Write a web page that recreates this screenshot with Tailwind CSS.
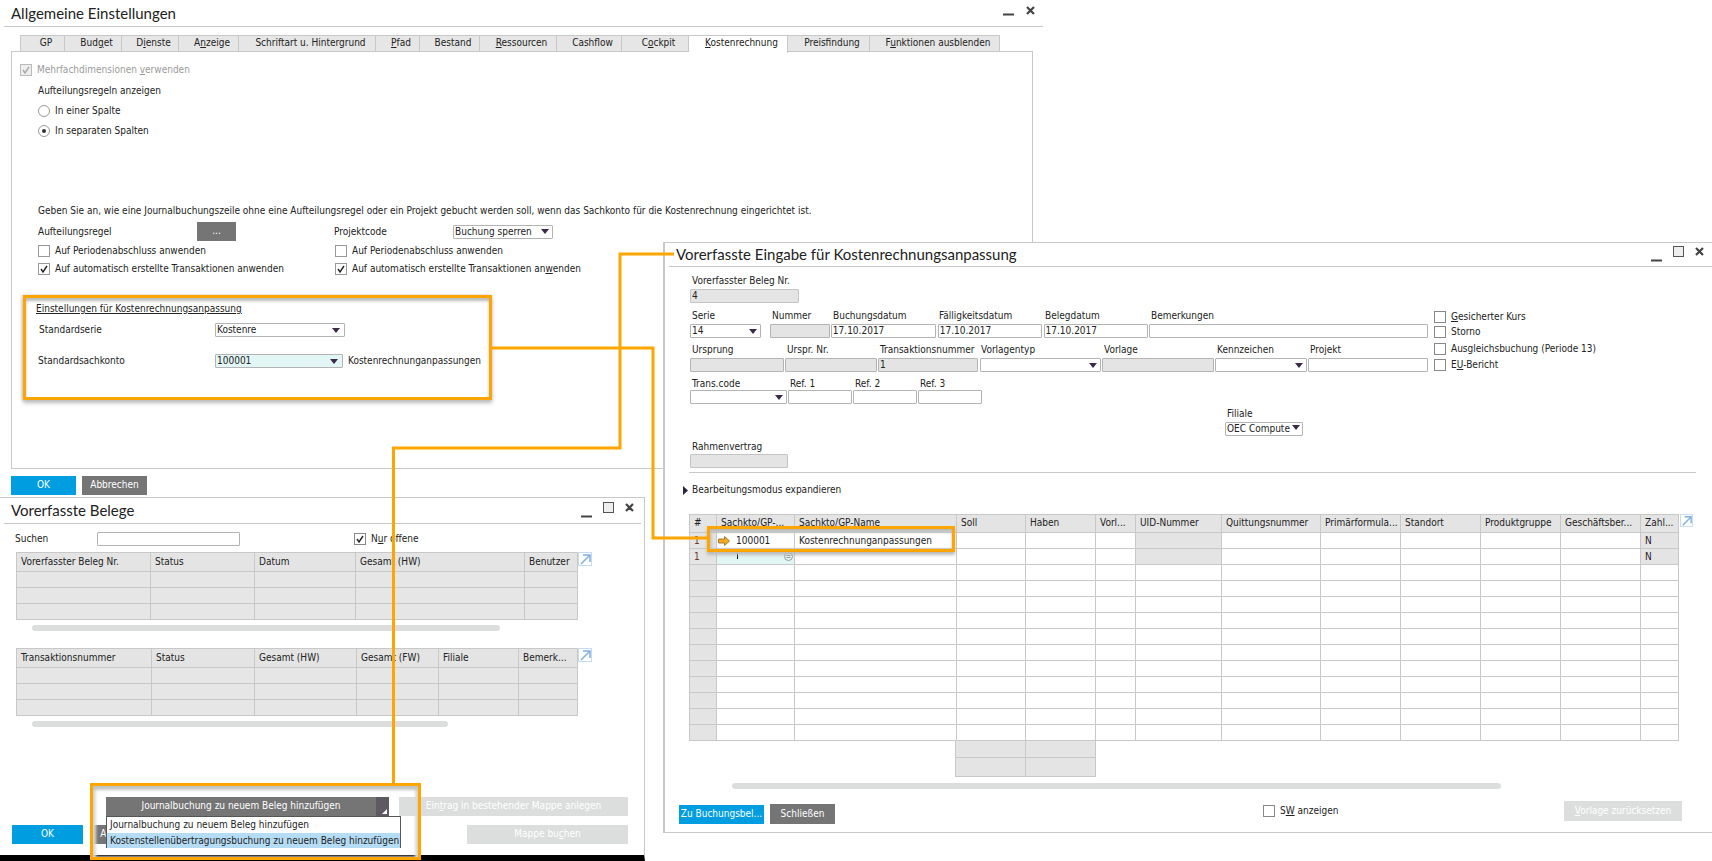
<!DOCTYPE html>
<html lang="de">
<head>
<meta charset="utf-8">
<title>Kostenrechnung</title>
<script src="https://cdn.jsdelivr.net/npm/@tailwindcss/browser@4"></script>
</head>
<body class="bg-white">
<div class="relative w-[1712px] h-[861px] overflow-hidden bg-white text-[10px] leading-[14px] text-[#222] font-['DejaVu_Sans_Condensed','Liberation_Sans',sans-serif]">

<!-- Fenster 1 -->
<section class="absolute left-0 top-0 w-[1043px] h-[497px]">
  <header class="ml-[4px] h-[27px] border-b border-[#c8c8c8] flex items-center justify-between pl-[7px] pr-[8px]">
    <h1 class="text-[15px] font-['Lato',sans-serif] text-[#222]">Allgemeine Einstellungen</h1>
    <div class="flex items-center gap-[12px] -mt-[6px]">
      <svg class="w-[11px] h-[11px]" viewBox="0 0 11 11"><path d="M0 9.5h11" stroke="#444" stroke-width="2"/></svg>
      <svg class="w-[9px] h-[9px]" viewBox="0 0 9 9"><path d="M1 1l7 7M8 1l-7 7" stroke="#444" stroke-width="2.2"/></svg>
    </div>
  </header>
  <nav class="ml-[20px] mt-[8px] flex h-[17px] text-center [&>div]:pl-[7px]">
    <div class="w-[45px] bg-[#e6e6e6] border border-[#c8c8c8]">GP</div>
    <div class="w-[57px] bg-[#e6e6e6] border-y border-r border-[#c8c8c8]">Bud<u>g</u>et</div>
    <div class="w-[57px] bg-[#e6e6e6] border-y border-r border-[#c8c8c8]">D<u>i</u>enste</div>
    <div class="w-[60px] bg-[#e6e6e6] border-y border-r border-[#c8c8c8]">A<u>n</u>zeige</div>
    <div class="w-[137px] bg-[#e6e6e6] border-y border-r border-[#c8c8c8]">Schriftart u. Hintergrund</div>
    <div class="w-[44px] bg-[#e6e6e6] border-y border-r border-[#c8c8c8]"><u>P</u>fad</div>
    <div class="w-[60px] bg-[#e6e6e6] border-y border-r border-[#c8c8c8]">Bestand</div>
    <div class="w-[77px] bg-[#e6e6e6] border-y border-r border-[#c8c8c8]"><u>R</u>essourcen</div>
    <div class="w-[65px] bg-[#e6e6e6] border-y border-r border-[#c8c8c8]">Cashf<u>l</u>ow</div>
    <div class="w-[67px] bg-[#e6e6e6] border-y border-r border-[#c8c8c8]">C<u>o</u>ckpit</div>
    <div class="w-[99px] bg-white border-t border-r border-[#c8c8c8] h-[18px] relative z-10"><u>K</u>ostenrechnung</div>
    <div class="w-[82px] bg-[#e6e6e6] border-y border-r border-[#c8c8c8]">Preisfindung</div>
    <div class="w-[130px] bg-[#e6e6e6] border-y border-r border-[#c8c8c8]">F<u>u</u>nktionen ausblenden</div>
  </nav>
  <div class="ml-[11px] w-[1022px] h-[418px] border border-[#c8c8c8] -mt-[1px]">
    <div class="mt-[11px] ml-[8px] flex items-center h-[14px] text-[#9a9a9a]">
      <svg class="w-[12px] h-[12px]" viewBox="0 0 12 12"><rect x=".5" y=".5" width="11" height="11" fill="#eee" stroke="#bbb"/><path d="M3 6l2 3 4-6" fill="none" stroke="#aaa" stroke-width="1.4"/></svg>
      <span class="ml-[5px]">Mehrfachdimensionen <u>v</u>erwenden</span>
    </div>
    <div class="mt-[7px] ml-[26px] h-[14px]">Aufteilungsregeln anzeigen</div>
    <div class="mt-[6px] ml-[26px] flex items-center h-[14px]">
      <svg class="w-[12px] h-[12px]" viewBox="0 0 12 12"><circle cx="6" cy="6" r="5.5" fill="#fff" stroke="#999"/></svg>
      <span class="ml-[5px]">In einer Spalte</span>
    </div>
    <div class="mt-[6px] ml-[26px] flex items-center h-[14px]">
      <svg class="w-[12px] h-[12px]" viewBox="0 0 12 12"><circle cx="6" cy="6" r="5.5" fill="#fff" stroke="#999"/><circle cx="6" cy="6" r="2" fill="#333"/></svg>
      <span class="ml-[5px]">In separaten Spalten</span>
    </div>
    <div class="mt-[66px] ml-[26px] h-[14px] whitespace-nowrap">Geben Sie an, wie eine Journalbuchungszeile ohne eine Aufteilungsregel oder ein Projekt gebucht werden soll, wenn das Sachkonto für die Kostenrechnung eingerichtet ist.</div>
    <div class="mt-[4px] ml-[26px] flex items-center h-[19px]">
      <span class="w-[159px] shrink-0">Aufteilungsregel</span>
      <div class="w-[39px] h-[19px] bg-[#757575] text-white text-center leading-[18px]">...</div>
      <span class="ml-[98px] w-[119px] shrink-0">Projektcode</span>
      <div class="w-[100px] h-[14px] border border-[#b4b4b4] rounded-[1px] flex items-center justify-between pl-[1px] pr-[3px] leading-[12px] whitespace-nowrap">Buchung sperren<svg class="w-[8px] h-[5px]" viewBox="0 0 8 5"><path d="M0 0h8L4 5z" fill="#3b2a4a"/></svg></div>
    </div>
    <div class="mt-[3px] ml-[26px] flex h-[14px] items-center whitespace-nowrap">
      <div class="w-[297px] flex items-center"><span class="w-[12px] h-[12px] border border-[#999] block"></span><span class="ml-[5px]">Auf Periodenabschluss anwenden</span></div>
      <div class="flex items-center"><span class="w-[12px] h-[12px] border border-[#999] block"></span><span class="ml-[5px]">Auf Periodenabschluss anwenden</span></div>
    </div>
    <div class="mt-[4px] ml-[26px] flex h-[14px] items-center whitespace-nowrap">
      <div class="w-[297px] flex items-center"><svg class="w-[12px] h-[12px]" viewBox="0 0 12 12"><rect x=".5" y=".5" width="11" height="11" fill="#fff" stroke="#999"/><path d="M3 6l2 3 4-6" fill="none" stroke="#222" stroke-width="1.4"/></svg><span class="ml-[5px]">Auf automatisch erstellte Transaktionen anwenden</span></div>
      <div class="flex items-center"><svg class="w-[12px] h-[12px]" viewBox="0 0 12 12"><rect x=".5" y=".5" width="11" height="11" fill="#fff" stroke="#999"/><path d="M3 6l2 3 4-6" fill="none" stroke="#222" stroke-width="1.4"/></svg><span class="ml-[5px]">Auf automatisch erstellte Transaktionen an<u>w</u>enden</span></div>
    </div>
    <div class="mt-[19px] ml-[11px] w-[469px] h-[105px] border-[3px] border-[#ffa500] shadow-[inset_0_3px_3px_#bbb,0_3px_4px_#bbb,-1px_0_3px_#ccc] pl-[10px] pt-[4px]">
      <div class="underline h-[14px] whitespace-nowrap">Einstellungen für Kostenrechnungsanpassung</div>
      <div class="mt-[7px] flex items-center h-[14px] ml-[3px]">
        <span class="w-[176px] shrink-0">Standardserie</span>
        <div class="w-[130px] h-[14px] border border-[#b4b4b4] rounded-[1px] flex items-center justify-between pl-[1px] pr-[4px] leading-[12px]">Kostenre<svg class="w-[8px] h-[5px]" viewBox="0 0 8 5"><path d="M0 0h8L4 5z" fill="#3b2a4a"/></svg></div>
      </div>
      <div class="mt-[17px] flex items-center h-[14px] ml-[2px]">
        <span class="w-[177px] shrink-0">Standardsachkonto</span>
        <div class="w-[128px] shrink-0 h-[14px] border border-[#b4b4b4] rounded-[1px] bg-[#e2f6f6] flex items-center justify-between pl-[1px] pr-[4px] leading-[12px]">100001<svg class="w-[8px] h-[5px]" viewBox="0 0 8 5"><path d="M0 0h8L4 5z" fill="#3b2a4a"/></svg></div>
        <span class="ml-[5px] whitespace-nowrap">Kostenrechnunganpassungen</span>
      </div>
    </div>
  </div>
  <div class="mt-[7px] ml-[11px] flex gap-[6px] text-white text-center leading-[18px]">
    <div class="w-[65px] h-[19px] bg-[#009de0]">OK</div>
    <div class="w-[65px] h-[19px] bg-[#757575]">Abbrechen</div>
  </div>
</section>

<!-- Fenster 2 -->
<section class="absolute left-0 top-[497px] w-[645px] h-[364px] bg-white border-t border-r border-[#c8c8c8] border-b-[6px] border-b-black">
  <header class="ml-[4px] mr-[3px] h-[26px] border-b border-[#c8c8c8] flex items-center justify-between pl-[7px] pr-[7px]">
    <h2 class="text-[15px] pb-[2px] font-['Lato',sans-serif] text-[#222]">Vorerfasste Belege</h2>
    <div class="flex items-center gap-[11px]">
      <svg class="w-[11px] h-[11px] mt-[4px]" viewBox="0 0 11 11"><path d="M0 9.5h11" stroke="#444" stroke-width="2"/></svg>
      <svg class="w-[11px] h-[11px] -mt-[6px]" viewBox="0 0 11 11"><rect x=".5" y=".5" width="10" height="10" fill="#eee" stroke="#555"/></svg>
      <svg class="w-[9px] h-[9px] -mt-[6px]" viewBox="0 0 9 9"><path d="M1 1l7 7M8 1l-7 7" stroke="#444" stroke-width="2.2"/></svg>
    </div>
  </header>
  <div class="mt-[8px] ml-[15px] flex items-center h-[14px]">
    <span class="w-[82px]">Suchen</span>
    <div class="w-[143px] h-[14px] border border-[#b4b4b4] rounded-[1px]"></div>
    <svg class="ml-[114px] w-[12px] h-[12px]" viewBox="0 0 12 12"><rect x=".5" y=".5" width="11" height="11" fill="#fff" stroke="#888"/><path d="M3 6l2 3 4-6" fill="none" stroke="#222" stroke-width="1.4"/></svg>
    <span class="ml-[5px]">N<u>u</u>r offene</span>
  </div>
  <div class="mt-[6px] ml-[16px] flex items-start">
    <table class="w-[561px] table-fixed border-collapse [&_td]:border [&_td]:border-[#c8c8c8] [&_td]:pl-[4px] bg-[#e6e6e6]">
      <colgroup><col class="w-[134px]"><col class="w-[104px]"><col class="w-[101px]"><col class="w-[169px]"><col class="w-[53px]"></colgroup>
      <tr class="h-[19px] bg-[#e4e4e4]"><td>Vorerfasster Beleg Nr.</td><td>Status</td><td>Datum</td><td>Gesamt (HW)</td><td>Benutzer</td></tr>
      <tr class="h-[16px]"><td></td><td></td><td></td><td></td><td></td></tr>
      <tr class="h-[16px]"><td></td><td></td><td></td><td></td><td></td></tr>
      <tr class="h-[16px]"><td></td><td></td><td></td><td></td><td></td></tr>
    </table>
    <svg class="w-[14px] h-[14px]" viewBox="0 0 14 14"><rect x=".5" y=".5" width="13" height="13" fill="#fff" stroke="#c5dcf0"/><path d="M3 12L11 4M5 3h7v7" fill="none" stroke="#7fb0dc" stroke-width="1.5"/></svg>
  </div>
  <div class="mt-[5px] ml-[32px] w-[468px] h-[6px] rounded-full bg-[#dcdedd]"></div>
  <div class="mt-[17px] ml-[16px] flex items-start">
    <table class="w-[561px] table-fixed border-collapse [&_td]:border [&_td]:border-[#c8c8c8] [&_td]:pl-[4px] bg-[#e6e6e6]">
      <colgroup><col class="w-[135px]"><col class="w-[103px]"><col class="w-[102px]"><col class="w-[82px]"><col class="w-[80px]"><col class="w-[59px]"></colgroup>
      <tr class="h-[19px] bg-[#e4e4e4]"><td>Transaktionsnummer</td><td>Status</td><td>Gesamt (HW)</td><td>Gesamt (FW)</td><td>Filiale</td><td>Bemerk...</td></tr>
      <tr class="h-[16px]"><td></td><td></td><td></td><td></td><td></td><td></td></tr>
      <tr class="h-[16px]"><td></td><td></td><td></td><td></td><td></td><td></td></tr>
      <tr class="h-[16px]"><td></td><td></td><td></td><td></td><td></td><td></td></tr>
    </table>
    <svg class="w-[14px] h-[14px]" viewBox="0 0 14 14"><rect x=".5" y=".5" width="13" height="13" fill="#fff" stroke="#c5dcf0"/><path d="M3 12L11 4M5 3h7v7" fill="none" stroke="#7fb0dc" stroke-width="1.5"/></svg>
  </div>
  <div class="mt-[5px] ml-[32px] w-[416px] h-[6px] rounded-full bg-[#dcdedd]"></div>
  <div class="mt-[70px] ml-[106px] flex relative">
    <div class="w-[283px] h-[19px] bg-[#757575] text-white flex">
      <span class="flex-1 text-center leading-[18px]">Journalbuchung zu neuem Beleg hinzufügen</span>
      <span class="w-[13px] h-[19px] bg-[#5f5a62] relative"><svg class="absolute right-[2px] bottom-[2px] w-[5px] h-[5px]" viewBox="0 0 5 5"><path d="M5 0v5H0z" fill="#fff"/></svg></span>
    </div>
    <div class="ml-[10px] w-[229px] h-[19px] bg-[#dcdedd] text-white text-center leading-[18px]">Ein<u>t</u>rag in bestehender Mappe anlegen</div>
    <div class="absolute left-0 top-[19px] w-[295px] h-[32px] bg-white border border-[#555] z-10">
      <div class="h-[16px] pl-[3px] leading-[16px] whitespace-nowrap">Journalbuchung zu neuem Beleg hinzufügen</div>
      <div class="h-[15px] pl-[3px] leading-[15px] bg-[#b5dcf5] whitespace-nowrap">Kostenstellenübertragungsbuchung zu neuem Beleg hinzufügen</div>
    </div>
  </div>
  <div class="mt-[9px] ml-[12px] flex text-center leading-[18px] text-white">
    <div class="w-[71px] h-[19px] bg-[#009de0]">OK</div>
    <div class="ml-[9px] w-[65px] h-[19px] bg-[#757575]">Abbrechen</div>
    <div class="ml-auto mr-[16px] w-[161px] h-[19px] bg-[#dcdedd]">Mappe bu<u>c</u>hen</div>
  </div>
  <div class="absolute left-[90px] top-[285px] w-[331px] h-[77px] border-[3px] border-[#ffa500] shadow-[inset_0_4px_3px_#c4c4c4,inset_3px_0_3px_#ddd,inset_-3px_0_3px_#ddd] z-20"></div>
</section>

<!-- Fenster 3 -->
<section class="absolute left-[663px] top-[242px] w-[1049px] h-[591px] bg-white border-l-2 border-y border-[#c8c8c8]">
  <header class="ml-[4px] h-[24px] border-b border-[#c8c8c8] flex items-center justify-between pl-[7px] pr-[8px]">
    <h2 class="text-[15px] pb-[2px] font-['Lato',sans-serif] text-[#222]">Vorerfasste Eingabe für Kostenrechnungsanpassung</h2>
    <div class="flex items-center gap-[11px]">
      <svg class="w-[11px] h-[11px] mt-[4px]" viewBox="0 0 11 11"><path d="M0 9.5h11" stroke="#444" stroke-width="2"/></svg>
      <svg class="w-[11px] h-[11px] -mt-[6px]" viewBox="0 0 11 11"><rect x=".5" y=".5" width="10" height="10" fill="#eee" stroke="#555"/></svg>
      <svg class="w-[9px] h-[9px] -mt-[6px]" viewBox="0 0 9 9"><path d="M1 1l7 7M8 1l-7 7" stroke="#444" stroke-width="2.2"/></svg>
    </div>
  </header>
  <div class="ml-[25px] flex">
    <div class="w-[738px]">
      <div class="mt-[7px] h-[14px] pl-[2px]">Vorerfasster Beleg Nr.</div>
      <div class="mt-[1px] w-[109px] h-[14px] bg-[#e4e4e4] border border-[#c4c4c4] rounded-[1px] pl-[1px] leading-[12px]">4</div>

      <div class="mt-[6px] h-[14px] flex pl-[2px]">
        <span class="w-[80px]">Serie</span><span class="w-[61px]">Nummer</span><span class="w-[106px]">Buchungsdatum</span><span class="w-[106px]">Fälligkeitsdatum</span><span class="w-[106px]">Belegdatum</span><span>Bemerkungen</span>
      </div>
      <div class="mt-[1px] flex h-[14px] leading-[12px] [&>div]:border [&>div]:rounded-[1px] [&>div]:border-[#b4b4b4] [&>div]:pl-[1px]">
        <div class="w-[71px] flex items-center justify-between pr-[3px]">14<svg class="w-[8px] h-[5px]" viewBox="0 0 8 5"><path d="M0 0h8L4 5z" fill="#3b2a4a"/></svg></div>
        <div class="ml-[9px] w-[60px] bg-[#e4e4e4]"></div>
        <div class="ml-[1px] w-[105px]">17.10.2017</div>
        <div class="ml-[2px] w-[104px]">17.10.2017</div>
        <div class="ml-[2px] w-[105px]">17.10.2017</div>
        <div class="ml-[1px] w-[279px]"></div>
      </div>

      <div class="mt-[5px] h-[14px] flex pl-[2px]">
        <span class="w-[95px]">Ursprung</span><span class="w-[93px]">Urspr. Nr.</span><span class="w-[101px] whitespace-nowrap">Transaktionsnummer</span><span class="w-[123px]">Vorlagentyp</span><span class="w-[113px]">Vorlage</span><span class="w-[93px]">Kennzeichen</span><span>Projekt</span>
      </div>
      <div class="mt-[1px] flex h-[14px] leading-[12px] [&>div]:border [&>div]:rounded-[1px] [&>div]:border-[#b4b4b4] [&>div]:pl-[1px]">
        <div class="w-[94px] bg-[#e4e4e4]"></div>
        <div class="ml-[1px] w-[92px] bg-[#e4e4e4]"></div>
        <div class="ml-[1px] w-[100px] bg-[#e4e4e4]">1</div>
        <div class="ml-[2px] w-[121px] flex items-center justify-end pr-[3px]"><svg class="w-[8px] h-[5px]" viewBox="0 0 8 5"><path d="M0 0h8L4 5z" fill="#3b2a4a"/></svg></div>
        <div class="ml-[1px] w-[112px] bg-[#e4e4e4]"></div>
        <div class="ml-[1px] w-[92px] flex items-center justify-end pr-[3px]"><svg class="w-[8px] h-[5px]" viewBox="0 0 8 5"><path d="M0 0h8L4 5z" fill="#3b2a4a"/></svg></div>
        <div class="ml-[1px] w-[120px]"></div>
      </div>

      <div class="mt-[5px] h-[13px] flex pl-[2px]">
        <span class="w-[98px]">Trans.code</span><span class="w-[65px]">Ref. 1</span><span class="w-[65px]">Ref. 2</span><span>Ref. 3</span>
      </div>
      <div class="flex h-[14px] [&>div]:border [&>div]:rounded-[1px] [&>div]:border-[#b4b4b4]">
        <div class="w-[97px] flex items-center justify-end pr-[3px]"><svg class="w-[8px] h-[5px]" viewBox="0 0 8 5"><path d="M0 0h8L4 5z" fill="#3b2a4a"/></svg></div>
        <div class="ml-[1px] w-[64px]"></div>
        <div class="ml-[1px] w-[64px]"></div>
        <div class="ml-[1px] w-[64px]"></div>
      </div>

      <div class="mt-[3px] ml-[537px] h-[14px]">Filiale</div>
      <div class="mt-[1px] ml-[535px] w-[78px] h-[14px] border border-[#b4b4b4] rounded-[1px] flex items-center justify-between pl-[1px] pr-[2px] leading-[12px] whitespace-nowrap"><span>OEC Compute</span><svg class="w-[8px] h-[5px] shrink-0 -mt-[3px]" viewBox="0 0 8 5"><path d="M0 0h8L4 5z" fill="#3b2a4a"/></svg></div>

      <div class="mt-[4px] h-[13px] pl-[2px]">Rahmenvertrag</div>
      <div class="mt-[1px] w-[98px] h-[14px] bg-[#e4e4e4] border border-[#c4c4c4] rounded-[1px]"></div>
    </div>
    <div class="ml-[6px]">
      <div class="mt-[44px] h-[12px] flex items-center"><span class="w-[12px] h-[12px] border border-[#888] block"></span><span class="ml-[5px]"><u>G</u>esicherter Kurs</span></div>
      <div class="mt-[3px] h-[12px] flex items-center"><span class="w-[12px] h-[12px] border border-[#888] block"></span><span class="ml-[5px]">Storno</span></div>
      <div class="mt-[5px] h-[12px] flex items-center"><span class="w-[12px] h-[12px] border border-[#888] block"></span><span class="ml-[5px]">Ausgleichsbuchung (Periode 13)</span></div>
      <div class="mt-[4px] h-[12px] flex items-center"><span class="w-[12px] h-[12px] border border-[#888] block"></span><span class="ml-[5px]">E<u>U</u>-Bericht</span></div>
    </div>
  </div>
  <div class="ml-[24px] mt-[4px] w-[1007px] border-t border-[#c8c8c8]"></div>
  <div class="mt-[10px] ml-[18px] h-[14px] flex items-center">
    <svg class="w-[5px] h-[9px]" viewBox="0 0 5 9"><path d="M0 0l5 4.5L0 9z" fill="#2c2440"/></svg>
    <span class="ml-[4px]">Bearbeitungsmodus expandieren</span>
  </div>
  <div class="mt-[17px] ml-[24px] flex items-start">
    <table class="w-[989px] table-fixed border-collapse [&_td]:border [&_td]:border-[#c8c8c8] [&_td]:pl-[4px] [&_td]:whitespace-nowrap [&_tr>td:first-child]:bg-[#e4e4e4]">
      <colgroup><col class="w-[27px]"><col class="w-[78px]"><col class="w-[162px]"><col class="w-[69px]"><col class="w-[70px]"><col class="w-[40px]"><col class="w-[86px]"><col class="w-[99px]"><col class="w-[80px]"><col class="w-[80px]"><col class="w-[80px]"><col class="w-[80px]"><col class="w-[38px]"></colgroup>
      <tr class="h-[18px] bg-[#e4e4e4] [&>td]:pb-[2px]"><td>#</td><td>Sachkto/GP-...</td><td>Sachkto/GP-Name</td><td>Soll</td><td>Haben</td><td>Vorl...</td><td>UID-Nummer</td><td>Quittungsnummer</td><td>Primärformula...</td><td>Standort</td><td>Produktgruppe</td><td>Geschäftsber...</td><td>Zahl...</td></tr>
      <tr class="h-[16px]"><td class="text-[#6b3a1e]">1</td><td class="!pl-0"><span class="flex items-center pl-[1px]"><svg class="w-[12px] h-[10px] shrink-0" viewBox="0 0 12 10"><path d="M.5 3h6V.5L11.5 5l-5 4.5V7h-6z" fill="#f7a823" stroke="#8a6a20" stroke-width=".8"/></svg><span class="ml-[6px]">100001</span></span></td><td>Kostenrechnunganpassungen</td><td></td><td></td><td></td><td class="bg-[#e4e4e4]"></td><td></td><td></td><td></td><td></td><td></td><td class="bg-[#e4e4e4]">N</td></tr>
      <tr class="h-[16px]"><td class="text-[#6b3a1e]">1</td><td class="bg-[#e2f6f6] !pl-0"><span class="flex items-center justify-between h-[14px] pr-[1px]"><span class="ml-[20px] w-[1px] h-[9px] bg-black -mt-[4px]"></span><svg class="w-[9px] h-[9px]" viewBox="0 0 9 9"><circle cx="4.5" cy="4.5" r="4" fill="none" stroke="#999"/><path d="M2.5 3.5h4M2.5 5.5h4" stroke="#999"/></svg></span></td><td></td><td></td><td></td><td></td><td class="bg-[#e4e4e4]"></td><td></td><td></td><td></td><td></td><td></td><td class="bg-[#e4e4e4]">N</td></tr>
      <tr class="h-[16px]"><td></td><td></td><td></td><td></td><td></td><td></td><td></td><td></td><td></td><td></td><td></td><td></td><td></td></tr>
      <tr class="h-[16px]"><td></td><td></td><td></td><td></td><td></td><td></td><td></td><td></td><td></td><td></td><td></td><td></td><td></td></tr>
      <tr class="h-[16px]"><td></td><td></td><td></td><td></td><td></td><td></td><td></td><td></td><td></td><td></td><td></td><td></td><td></td></tr>
      <tr class="h-[16px]"><td></td><td></td><td></td><td></td><td></td><td></td><td></td><td></td><td></td><td></td><td></td><td></td><td></td></tr>
      <tr class="h-[16px]"><td></td><td></td><td></td><td></td><td></td><td></td><td></td><td></td><td></td><td></td><td></td><td></td><td></td></tr>
      <tr class="h-[16px]"><td></td><td></td><td></td><td></td><td></td><td></td><td></td><td></td><td></td><td></td><td></td><td></td><td></td></tr>
      <tr class="h-[16px]"><td></td><td></td><td></td><td></td><td></td><td></td><td></td><td></td><td></td><td></td><td></td><td></td><td></td></tr>
      <tr class="h-[16px]"><td></td><td></td><td></td><td></td><td></td><td></td><td></td><td></td><td></td><td></td><td></td><td></td><td></td></tr>
      <tr class="h-[16px]"><td></td><td></td><td></td><td></td><td></td><td></td><td></td><td></td><td></td><td></td><td></td><td></td><td></td></tr>
      <tr class="h-[16px]"><td></td><td></td><td></td><td></td><td></td><td></td><td></td><td></td><td></td><td></td><td></td><td></td><td></td></tr>
      <tr class="h-[16px]"><td></td><td></td><td></td><td></td><td></td><td></td><td></td><td></td><td></td><td></td><td></td><td></td><td></td></tr>
    </table>
    <svg class="ml-[1px] w-[13px] h-[13px]" viewBox="0 0 14 14"><rect x=".5" y=".5" width="13" height="13" fill="#fff" stroke="#c5dcf0"/><path d="M3 12L11 4M5 3h7v7" fill="none" stroke="#7fb0dc" stroke-width="1.5"/></svg>
  </div>
  <div class="ml-[290px] w-[141px] grid grid-cols-2 grid-rows-[17px_18px] bg-[#e4e4e4] border-x border-b border-[#c8c8c8] [&>div:nth-child(odd)]:border-r [&>div]:border-[#c8c8c8] [&>div:nth-child(-n+2)]:border-b">
    <div></div><div></div><div></div><div></div>
  </div>
  <div class="mt-[6px] ml-[67px] w-[769px] h-[6px] rounded-full bg-[#dcdedd]"></div>
  <div class="mt-[12px] ml-[14px] flex h-[23px] items-start text-center">
    <div class="mt-[4px] w-[85px] h-[19px] bg-[#009de0] text-white leading-[18px] whitespace-nowrap">Zu Buchungsbel...</div>
    <div class="mt-[3px] ml-[6px] w-[65px] h-[20px] bg-[#757575] text-white leading-[19px]">Schließen</div>
    <span class="mt-[4px] ml-[428px] w-[12px] h-[12px] border border-[#888] block"></span>
    <span class="mt-[3px] ml-[5px] whitespace-nowrap">S<u>W</u> anzeigen</span>
    <div class="ml-auto mr-[30px] w-[118px] h-[20px] bg-[#dcdedd] text-white leading-[19px] whitespace-nowrap"><u>V</u>orlage zurücksetzen</div>
  </div>
  <div class="absolute left-[42px] top-[283px] w-[248px] h-[26px] border-[3px] border-[#ffa500] shadow-[inset_0_3px_3px_#bbb,0_3px_3px_#bbb,inset_2px_0_3px_#ccc] z-20"></div>
</section>

<!-- Verbindungslinien -->
<svg class="absolute left-0 top-0 w-[1712px] h-[861px] z-30 pointer-events-none" viewBox="0 0 1712 861" fill="none" stroke="#ffa500" stroke-width="3">
  <path d="M492 348H653V538H707"/>
  <path d="M674 254H620V448H393.5V783"/>
</svg>
</div>
</body>
</html>
